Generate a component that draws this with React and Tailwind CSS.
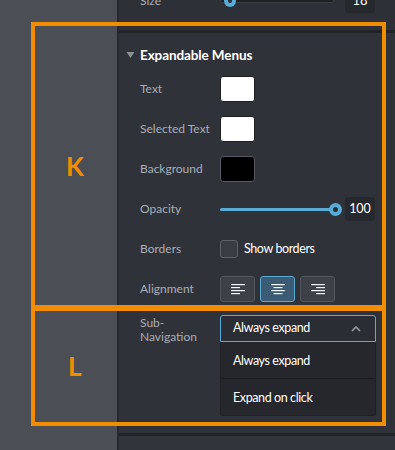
import React from "react";

const font = { fontFamily: "Lato, 'Open Sans', sans-serif" };

function Swatch({ color }) {
  return (
    <div
      className={`w-[35px] h-[26px] rounded-[3px] border border-[#1d1f23] ${color}`}
    />
  );
}

function AlignIcon({ kind }) {
  const lines = [
    { w: 14, y: 2 },
    { w: 9, y: 5 },
    { w: 14, y: 8 },
    { w: 9, y: 11 },
  ];
  return (
    <svg width="16" height="14" viewBox="0 0 16 14">
      {lines.map((l, i) => {
        let x = 1;
        if (kind === "center") x = 1 + (14 - l.w) / 2;
        if (kind === "right") x = 15 - l.w;
        return (
          <rect key={i} x={x} y={l.y} width={l.w} height="1.2" fill="#f2f4f7" />
        );
      })}
    </svg>
  );
}

function Row({ label, children }) {
  return (
    <div className="h-[40px] flex items-center">
      <div className="w-[101px] shrink-0 pl-[21px] text-[12px] text-[#a9aeb6] whitespace-nowrap">{label}</div>
      <div className="flex items-center">{children}</div>
    </div>
  );
}

export default function App() {
  return (
    <div className="relative w-[395px] h-[450px] overflow-hidden flex bg-[#4b4f55]" style={font}>
      <div className="w-[117px] shrink-0 bg-[#4b4f55]" />
      <div className="w-[2px] shrink-0 bg-[#26282c]" />
      <div className="flex-1 flex flex-col bg-[#2e3137]">
        {/* top section */}
        <div className="h-[30px] overflow-hidden bg-[#2d3036]">
          <div className="h-[40px] -mt-[19px] flex items-center">
            <div className="w-[101px] shrink-0 pl-[21px] text-[12px] text-[#a9aeb6]">Size</div>
            <div className="relative w-[114px] h-[4px] rounded bg-[#1e2024] border border-[#3a3d43]">
              <div className="absolute left-[3px] top-[-5px] w-[12px] h-[12px] rounded-full bg-[#59acd6] flex items-center justify-center">
                <div className="w-[4px] h-[4px] rounded-full bg-[#2b2e34]" />
              </div>
            </div>
            <div className="ml-[11px] w-[30px] h-[23px] rounded-[3px] bg-[#25282d] flex items-center justify-center text-[13px] text-white">
              18
            </div>
          </div>
        </div>
        <div className="h-[3px] bg-[#222428]" />
        {/* expandable menus section */}
        <div className="bg-[#2f3238] flex flex-col h-[400px]">
          <div className="h-[36px] pt-[8px] flex items-center pl-[7px]">
            <svg width="9" height="8" viewBox="0 0 9 8" className="mr-[5px]">
              <path d="M0.5 1 L8.5 1 L4.5 7 Z" fill="#8b8f96" />
            </svg>
            <span className="text-[13.5px] font-bold text-white tracking-[-0.1px]">Expandable Menus</span>
          </div>
          <Row label="Text">
            <Swatch color="bg-white" />
          </Row>
          <Row label="Selected Text">
            <Swatch color="bg-white" />
          </Row>
          <Row label="Background">
            <div className="w-[35px] h-[26px] rounded-[3px] border border-[#55595f] bg-black" />
          </Row>
          <Row label="Opacity">
            <div className="relative w-[116px] h-[3px] bg-[#59acd6] rounded">
              <div className="absolute right-[-6px] top-[-5px] w-[13px] h-[13px] rounded-full bg-[#59acd6] flex items-center justify-center">
                <div className="w-[5px] h-[5px] rounded-full bg-[#2b2e34]" />
              </div>
            </div>
            <div className="ml-[9px] w-[30px] h-[24px] rounded-[3px] bg-[#25282d] flex items-center justify-center text-[12.5px] text-white">
              100
            </div>
          </Row>
          <Row label="Borders">
            <div className="w-[18px] h-[18px] rounded-[3px] border border-[#5d6168] bg-[#393c43]" />
            <span className="ml-[6px] text-[12.5px] text-white tracking-[-0.4px]">Show borders</span>
          </Row>
          <Row label="Alignment">
            <div className="flex gap-[5px]">
              <div className="w-[35px] h-[26px] rounded-[3px] border border-[#52565d] bg-[#3c4047] flex items-center justify-center">
                <AlignIcon kind="left" />
              </div>
              <div className="w-[35px] h-[26px] rounded-[3px] border border-[#5aaad4] bg-[#3b5a73] flex items-center justify-center">
                <AlignIcon kind="center" />
              </div>
              <div className="w-[35px] h-[26px] rounded-[3px] border border-[#52565d] bg-[#3c4047] flex items-center justify-center">
                <AlignIcon kind="right" />
              </div>
            </div>
          </Row>
          <div className="flex pt-[6px]">
            <div className="w-[101px] shrink-0 pl-[21px] text-[12px] leading-[14px] text-[#a9aeb6] pt-[1px]">
              Sub-
              <br />
              Navigation
            </div>
            <div className="w-[156px] flex flex-col">
              <div className="h-[27px] rounded-t-[3px] border border-[#5aaad4] bg-[#2a2d33] flex items-center justify-between pl-[12px] pr-[14px]">
                <span className="text-[12.5px] text-white tracking-[-0.4px]">Always expand</span>
                <svg width="10" height="6" viewBox="0 0 10 6">
                  <path d="M1 5 L5 1 L9 5" stroke="#9a9ea5" strokeWidth="1.6" fill="none" />
                </svg>
              </div>
              <div className="bg-[#25272c] rounded-b-[3px] border border-t-0 border-[#1f2125]">
                <div className="h-[37px] flex items-center pt-[3px] pl-[12px] text-[12.5px] text-white tracking-[-0.4px] border-b border-[#1b1d20]">
                  Always expand
                </div>
                <div className="h-[36px] flex items-center pt-[2px] pl-[12px] text-[12.5px] text-white tracking-[-0.4px]">
                  Expand on click
                </div>
              </div>
            </div>
          </div>
        </div>
        <div className="h-[3px] bg-[#222428]" />
        <div className="flex-1 bg-[#31343a]" />
      </div>

      {/* annotation boxes */}
      <div className="absolute left-[31px] top-[22px] w-[355px] h-[287px] border-[4px] border-[#f28c00]">
        <span className="absolute left-[31px] top-[127px] text-[26px] font-bold text-[#f28c00] leading-none">K</span>
      </div>
      <div className="absolute left-[31px] top-[307px] w-[355px] h-[119px] border-[4px] border-[#f28c00]">
        <span className="absolute left-[33px] top-[42px] text-[26px] font-bold text-[#f28c00] leading-none">L</span>
      </div>
    </div>
  );
}
